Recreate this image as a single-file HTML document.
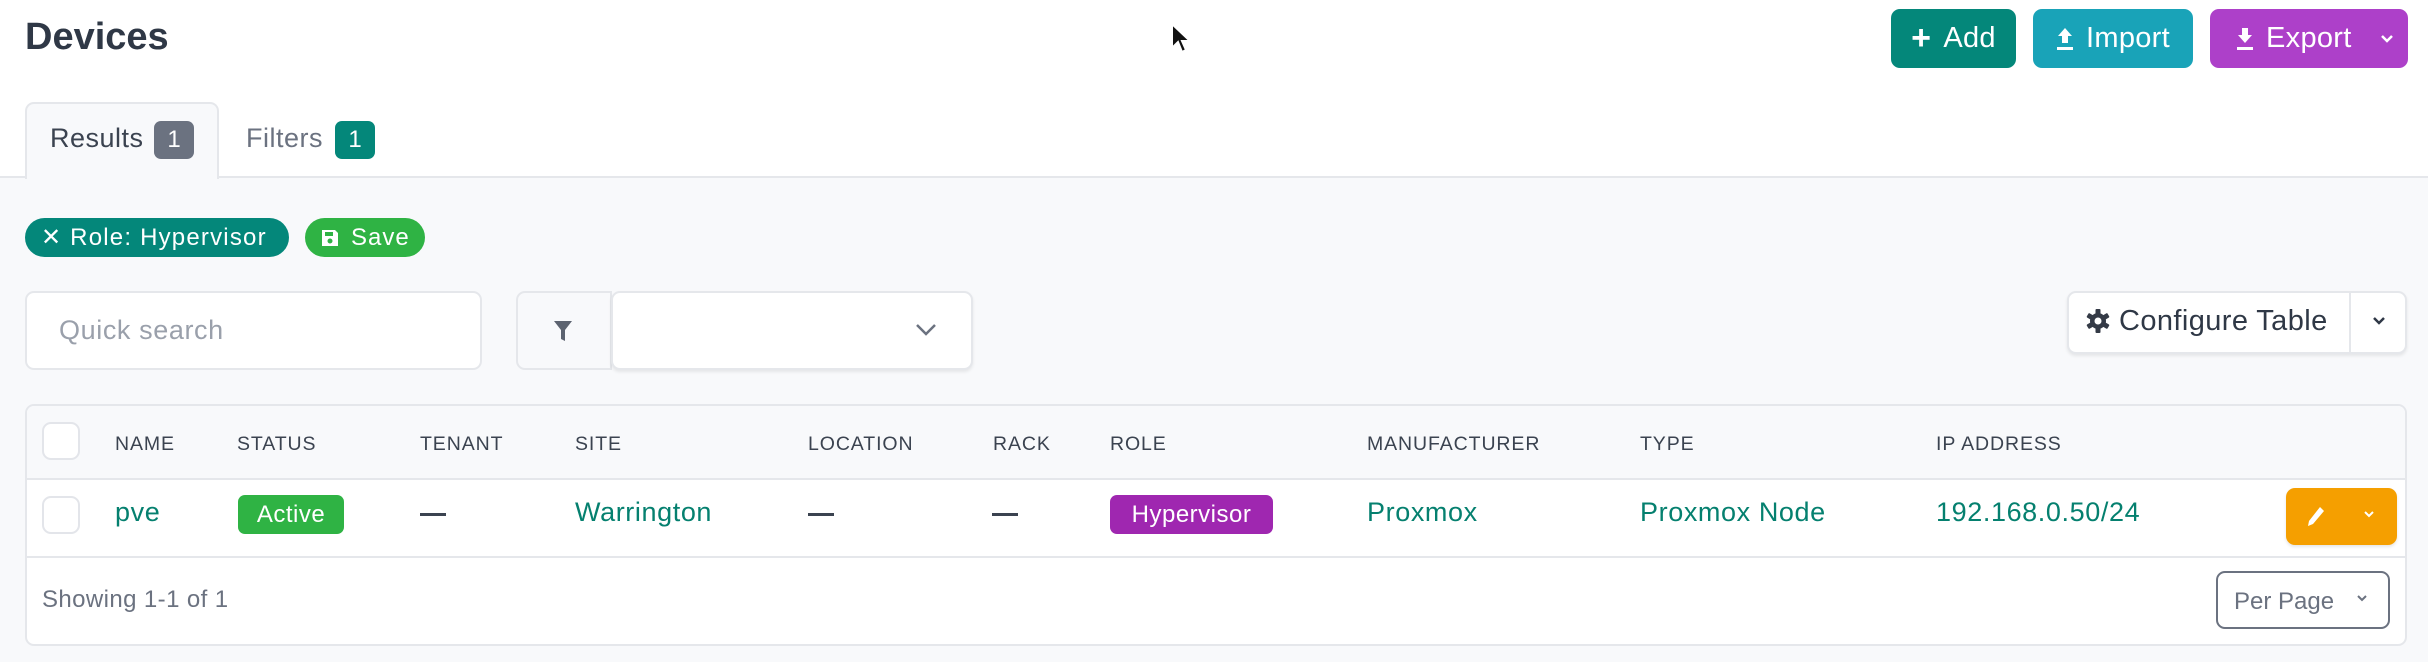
<!DOCTYPE html>
<html><head><meta charset="utf-8"><style>
*{box-sizing:border-box;margin:0;padding:0}
body{width:2428px;height:662px;background:#fff;font-family:"Liberation Sans",sans-serif;position:relative;overflow:hidden;color:#343a40}
.a{position:absolute}
.btn{position:absolute;border-radius:9px;color:#fff;font-size:29px;display:flex;align-items:center;justify-content:center;gap:12px;letter-spacing:.3px}
.hd{position:absolute;top:433px;font-size:19.5px;color:#3b4350;letter-spacing:.9px}
.cell{position:absolute;top:497px;font-size:27px;color:#05806f;letter-spacing:.6px}
.dash{position:absolute;top:513px;width:26px;height:3px;background:#3b4350}
.cb{position:absolute;left:42px;width:38px;height:38px;border:2px solid #e3e5ea;border-radius:9px;background:#fff}
</style></head><body>
<div class="a" style="left:25px;top:16px;font-size:38px;font-weight:bold;color:#2f3846">Devices</div>
<svg class="a" style="left:1170px;top:22px" width="22" height="34" viewBox="0 0 22 34"><path d="M2 2 L2 26 L8 20 L12 30 L16 28 L12 19 L20 19 Z" fill="#111" stroke="#fff" stroke-width="2"/></svg>
<div class="btn" style="left:1891px;top:9px;width:125px;height:59px;background:#04877a"><span style="font-size:34px;font-weight:bold">+</span>Add</div>
<div class="btn" style="left:2033px;top:9px;width:160px;height:59px;background:#19a3b8"><svg width="18" height="24" viewBox="0 0 18 24"><path d="M9 1 L2 9 H6 V16 H12 V9 H16 Z M1 20 H17 V23 H1 Z" fill="#fff"/></svg>Import</div>
<div class="btn" style="left:2210px;top:9px;width:198px;height:59px;background:#ad40c9;justify-content:flex-start;padding-left:26px"><svg width="18" height="24" viewBox="0 0 18 24"><path d="M6 1 H12 V8 H16 L9 16 L2 8 H6 Z M1 20 H17 V23 H1 Z" fill="#fff"/></svg>Export<svg style="margin-left:16px" width="14" height="10" viewBox="0 0 14 10"><path d="M2 2 L7 7 L12 2" stroke="#fff" stroke-width="2.5" fill="none"/></svg></div>
<div class="a" style="left:0;top:176px;width:2428px;height:486px;background:#f8f9fb;border-top:2px solid #e5e7eb"></div>
<div class="a" style="left:25px;top:102px;width:194px;height:77px;background:#f8f9fb;border:2px solid #e5e7eb;border-bottom:none;border-radius:9px 9px 0 0"></div>
<div class="a" style="left:50px;top:123px;font-size:27px;color:#3b4350;letter-spacing:.5px">Results</div>
<div class="a" style="left:154px;top:121px;width:40px;height:38px;border-radius:7px;background:#6b7280;color:#fff;font-size:24px;text-align:center;line-height:38px">1</div>
<div class="a" style="left:246px;top:123px;font-size:27px;color:#6b7280;letter-spacing:.5px">Filters</div>
<div class="a" style="left:335px;top:121px;width:40px;height:38px;border-radius:7px;background:#04877a;color:#fff;font-size:24px;text-align:center;line-height:38px">1</div>
<div class="a" style="left:25px;top:218px;width:264px;height:39px;border-radius:20px;background:#04877a;color:#fff;font-size:24px;line-height:39px;padding-left:16px;letter-spacing:1.2px;white-space:nowrap">✕&nbsp;Role: Hypervisor</div>
<div class="a" style="left:305px;top:218px;width:120px;height:39px;border-radius:20px;background:#2fb344;color:#fff;font-size:24px;line-height:39px;padding-left:16px;display:flex;align-items:center;gap:12px;letter-spacing:1px"><svg width="18" height="18" viewBox="0 0 18 18"><path d="M1 1 H14 L17 4 V17 H1 Z" fill="#fff"/><rect x="4" y="3" width="8" height="4" fill="#2fb344"/><circle cx="9" cy="12" r="2.5" fill="#2fb344"/></svg>Save</div>
<div class="a" style="left:25px;top:291px;width:457px;height:79px;background:#fff;border:2px solid #e5e7eb;border-radius:9px;font-size:27px;color:#9aa0ab;padding:22px 0 0 32px;letter-spacing:.6px">Quick search</div>
<div class="a" style="left:516px;top:291px;width:96px;height:79px;background:#f8f9fb;border:2px solid #e5e7eb;border-radius:9px 0 0 9px"></div>
<svg class="a" style="left:553px;top:320px" width="20" height="22" viewBox="0 0 20 22"><path d="M1 1 H19 L12 10 V21 L8 19 V10 Z" fill="#5c6370"/></svg>
<div class="a" style="left:611px;top:291px;width:362px;height:79px;background:#fff;border:2px solid #e5e7eb;border-radius:9px;box-shadow:0 2px 3px rgba(0,0,0,.08)"></div>
<svg class="a" style="left:915px;top:323px" width="22" height="14" viewBox="0 0 22 14"><path d="M2 2 L11 11 L20 2" stroke="#6b7280" stroke-width="2.5" fill="none"/></svg>
<div class="a" style="left:2067px;top:291px;width:340px;height:63px;background:#fff;border:2px solid #e5e7eb;border-radius:9px;box-shadow:0 2px 3px rgba(0,0,0,.08)"></div>
<div class="a" style="left:2349px;top:293px;width:2px;height:59px;background:#e5e7eb"></div>
<svg class="a" style="left:2086px;top:309px" width="24" height="24" viewBox="0 0 24 24"><g fill="#343a46"><circle cx="12" cy="12" r="8"/><rect x="9.5" y="0" width="5" height="24" rx="1"/><rect x="9.5" y="0" width="5" height="24" rx="1" transform="rotate(60 12 12)"/><rect x="9.5" y="0" width="5" height="24" rx="1" transform="rotate(120 12 12)"/></g><circle cx="12" cy="12" r="3.5" fill="#fff"/></svg>
<div class="a" style="left:2119px;top:305px;font-size:29px;color:#2f3846;letter-spacing:.4px">Configure Table</div>
<svg class="a" style="left:2372px;top:316px" width="14" height="10" viewBox="0 0 14 10"><path d="M2 2 L7 7 L12 2" stroke="#2f3846" stroke-width="2.5" fill="none"/></svg>
<div class="a" style="left:25px;top:404px;width:2382px;height:242px;background:#fff;border:2px solid #e5e7eb;border-radius:9px;overflow:hidden">
 <div style="height:74px;background:#f8f9fb;border-bottom:2px solid #e5e7eb"></div>
 <div style="height:78px;border-bottom:2px solid #e5e7eb"></div>
</div>
<div class="cb" style="top:422px"></div>
<div class="cb" style="top:496px"></div>
<div class="hd" style="left:115px">NAME</div>
<div class="hd" style="left:237px">STATUS</div>
<div class="hd" style="left:420px">TENANT</div>
<div class="hd" style="left:575px">SITE</div>
<div class="hd" style="left:808px">LOCATION</div>
<div class="hd" style="left:993px">RACK</div>
<div class="hd" style="left:1110px">ROLE</div>
<div class="hd" style="left:1367px">MANUFACTURER</div>
<div class="hd" style="left:1640px">TYPE</div>
<div class="hd" style="left:1936px">IP ADDRESS</div>
<div class="cell" style="left:115px">pve</div>
<div class="a" style="left:238px;top:495px;width:106px;height:39px;border-radius:7px;background:#2fb344;color:#fff;font-size:24px;text-align:center;line-height:39px;letter-spacing:.5px">Active</div>
<div class="dash" style="left:420px"></div>
<div class="cell" style="left:575px">Warrington</div>
<div class="dash" style="left:808px"></div>
<div class="dash" style="left:992px"></div>
<div class="a" style="left:1110px;top:495px;width:163px;height:39px;border-radius:7px;background:#9f27b0;color:#fff;font-size:24px;text-align:center;line-height:39px;letter-spacing:.5px">Hypervisor</div>
<div class="cell" style="left:1367px">Proxmox</div>
<div class="cell" style="left:1640px">Proxmox Node</div>
<div class="cell" style="left:1936px">192.168.0.50/24</div>
<div class="a" style="left:2286px;top:488px;width:111px;height:57px;border-radius:9px;background:#f59f00;box-shadow:0 2px 3px rgba(0,0,0,.1)"></div>
<svg class="a" style="left:2306px;top:505px" width="20" height="22" viewBox="0 0 20 22"><path d="M14 2 L18 6 L7 19 L2 21 L3 16 Z" fill="#fff"/></svg>
<svg class="a" style="left:2363px;top:510px" width="12" height="9" viewBox="0 0 12 9"><path d="M2 2 L6 6 L10 2" stroke="#fff" stroke-width="2" fill="none"/></svg>
<div class="a" style="left:42px;top:586px;font-size:24px;color:#6b7280;letter-spacing:.4px">Showing 1-1 of 1</div>
<div class="a" style="left:2216px;top:571px;width:174px;height:58px;border:2px solid #6b7280;border-radius:9px;background:#fff;font-size:24px;color:#6b7280;padding:15px 0 0 16px">Per Page</div>
<svg class="a" style="left:2356px;top:594px" width="12" height="9" viewBox="0 0 12 9"><path d="M2 2 L6 6 L10 2" stroke="#6b7280" stroke-width="2" fill="none"/></svg>
</body></html>
